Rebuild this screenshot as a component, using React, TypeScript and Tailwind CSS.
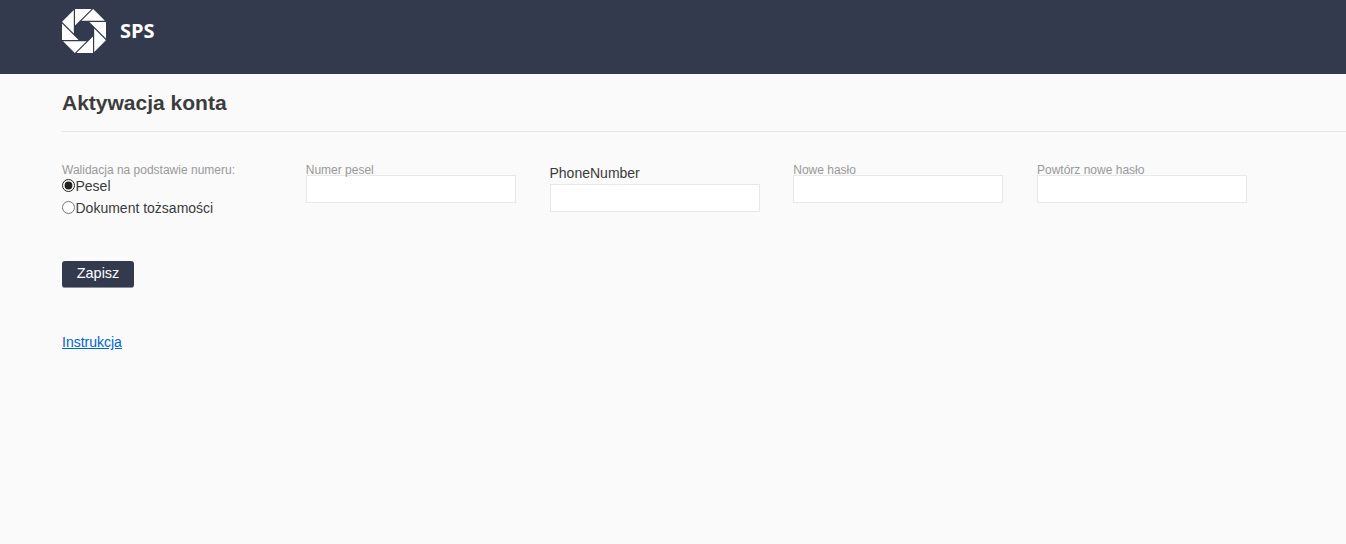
function Logo() {
  // aperture blades, one triangle rotated around the centre
  const blades = [0, 45, 90, 135, 180, 225, 270, 315]
  return (
    <svg width="46" height="46" viewBox="0 0 46 46" className="shrink-0">
      {blades.map((r) => (
        <polygon key={r} points="14,1 30.6,1 14,17.6" fill="#fff" transform={`rotate(${r} 23 23)`} />
      ))}
    </svg>
  )
}

function Field({ label }: { label: string }) {
  return (
    <div className="w-[210px] pt-[11px]">
      <label className="block h-[12px] text-xs leading-[14px] text-[#999]">{label}</label>
      <input className="block h-[28px] w-full border border-[#e8e8e8] bg-white" />
    </div>
  )
}

export default function App() {
  return (
    <div className="h-[544px] overflow-hidden bg-[#fafafa] font-['Liberation_Sans',Arial,sans-serif] text-[#3a3a3a]">
      <header className="flex h-[74px] items-start bg-[#343a4e] pl-[61px] pt-[8px]">
        <Logo />
        <span className="ml-[13px] mt-[9px] font-['Open_Sans',sans-serif] text-[20px] font-bold leading-[28px] text-white">SPS</span>
      </header>

      <main className="pl-[62px]">
        <h1 className="flex h-[58px] items-center border-b border-[#e7e7e7] text-[21px] leading-[26px] font-bold text-[#3c3c3c]">
          Aktywacja konta
        </h1>

        <div className="flex h-[100px] items-start gap-[33.75px] pt-[20px]">
          <div className="w-[210px] pt-[11px]">
            <div className="h-[12px] text-xs leading-[14px] text-[#999]">Walidacja na podstawie numeru:</div>
            <label className="flex h-[22px] items-center text-sm">
              <input type="radio" name="v" defaultChecked className="m-0 -mt-[2px] mr-[0.5px] size-[13px] accent-[#222]" />
              Pesel
            </label>
            <label className="flex h-[22px] items-center text-sm">
              <input type="radio" name="v" className="m-0 -mt-[2px] mr-[0.5px] size-[13px]" />
              Dokument tożsamości
            </label>
          </div>
          <Field label="Numer pesel" />
          <div className="w-[210px] pt-[13px]">
            <label className="block h-[19px] text-sm leading-[16px]">PhoneNumber</label>
            <input className="block h-[28px] w-full border border-[#e8e8e8] bg-white" />
          </div>
          <Field label="Nowe hasło" />
          <Field label="Powtórz nowe hasło" />
        </div>

        <button className="mt-[29px] block h-[27px] w-[72px] rounded-[3px] border-b border-[#8a8d99] bg-[#343a4e] text-[14.5px] text-white">
          Zapisz
        </button>

        <a href="#" className="mt-[46px] inline-block text-sm leading-[16px] text-[#0066cc] underline">
          Instrukcja
        </a>
      </main>
    </div>
  )
}
